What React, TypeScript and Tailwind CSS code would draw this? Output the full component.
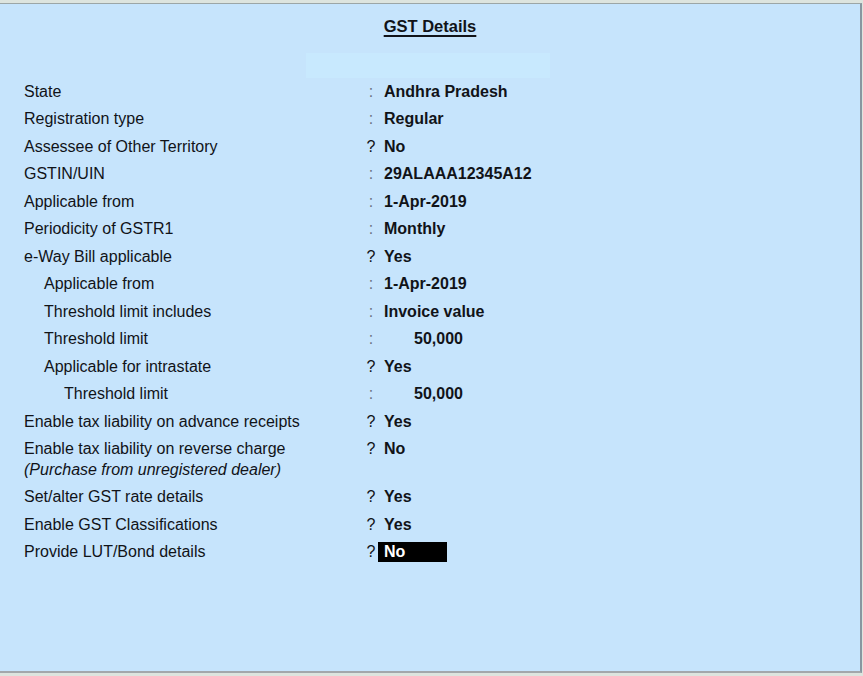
import React from 'react';

type Row = {
    label: string;
    sep: ':' | '?';
    value: string;
    indent?: number;
    number?: boolean;
    note?: string;
    active?: boolean;
};

const rows: Row[] = [
    { label: 'State', sep: ':', value: 'Andhra Pradesh' },
    { label: 'Registration type', sep: ':', value: 'Regular' },
    { label: 'Assessee of Other Territory', sep: '?', value: 'No' },
    { label: 'GSTIN/UIN', sep: ':', value: '29ALAAA12345A12' },
    { label: 'Applicable from', sep: ':', value: '1-Apr-2019' },
    { label: 'Periodicity of GSTR1', sep: ':', value: 'Monthly' },
    { label: 'e-Way Bill applicable', sep: '?', value: 'Yes' },
    { label: 'Applicable from', sep: ':', value: '1-Apr-2019', indent: 1 },
    { label: 'Threshold limit includes', sep: ':', value: 'Invoice value', indent: 1 },
    { label: 'Threshold limit', sep: ':', value: '50,000', indent: 1, number: true },
    { label: 'Applicable for intrastate', sep: '?', value: 'Yes', indent: 1 },
    { label: 'Threshold limit', sep: ':', value: '50,000', indent: 2, number: true },
    { label: 'Enable tax liability on advance receipts', sep: '?', value: 'Yes' },
    { label: 'Enable tax liability on reverse charge', sep: '?', value: 'No', note: '(Purchase from unregistered dealer)' },
    { label: 'Set/alter GST rate details', sep: '?', value: 'Yes' },
    { label: 'Enable GST Classifications', sep: '?', value: 'Yes' },
    { label: 'Provide LUT/Bond details', sep: '?', value: 'No', active: true },
];

const indentClass = (indent?: number) =>
    indent === 2 ? 'pl-[64px]' : indent === 1 ? 'pl-[44px]' : 'pl-[24px]';

const DetailRow: React.FC<{ row: Row }> = ({ row }) => (
    <div className="flex flex-col">
        <div className="flex h-[27.5px] items-center">
            <div className={`w-[364px] shrink-0 ${indentClass(row.indent)}`}>{row.label}</div>
            <div className={`w-[14px] shrink-0 text-center ${row.sep === ':' ? 'text-[#6b7380]' : ''}`}>{row.sep}</div>
            {row.active ? (
                <div className="flex h-[20px] w-[69px] items-center bg-black px-[6px] font-bold text-white">{row.value}</div>
            ) : row.number ? (
                <div className="pl-[6px] font-bold">
                    <span className="inline-block w-[79px] text-right">{row.value}</span>
                </div>
            ) : (
                <div className="pl-[6px] font-bold">{row.value}</div>
            )}
        </div>
        {row.note && (
            <div className="h-[20.5px] pl-[24px] italic leading-[13px]">{row.note}</div>
        )}
    </div>
);

const App: React.FC = () => {
    return (
        <div className="h-[676px] w-[863px] overflow-hidden bg-[#dde4de] pt-[3px] font-['Liberation_Sans',Arial,sans-serif] text-[16px] text-[#111318]">
            <div className="h-[670px] w-[862px] border-t border-r-2 border-b-2 border-t-[#9ca6a6] border-r-[#8896a0] border-b-[#a3a7ab] bg-[#c6e4fc]">
                <div className="pt-[11px] text-center">
                    <span className="text-[16.5px] font-bold leading-[20px] underline decoration-[1.5px] underline-offset-[3px]">GST Details</span>
                </div>
                <div className="ml-[306px] mt-[14px] h-[25px] w-[244px] bg-[#c8e9fe]"></div>
                <div className="flex flex-col">
                    {rows.map((row, i) => (
                        <DetailRow key={i} row={row} />
                    ))}
                </div>
            </div>
        </div>
    );
};

export default App;
